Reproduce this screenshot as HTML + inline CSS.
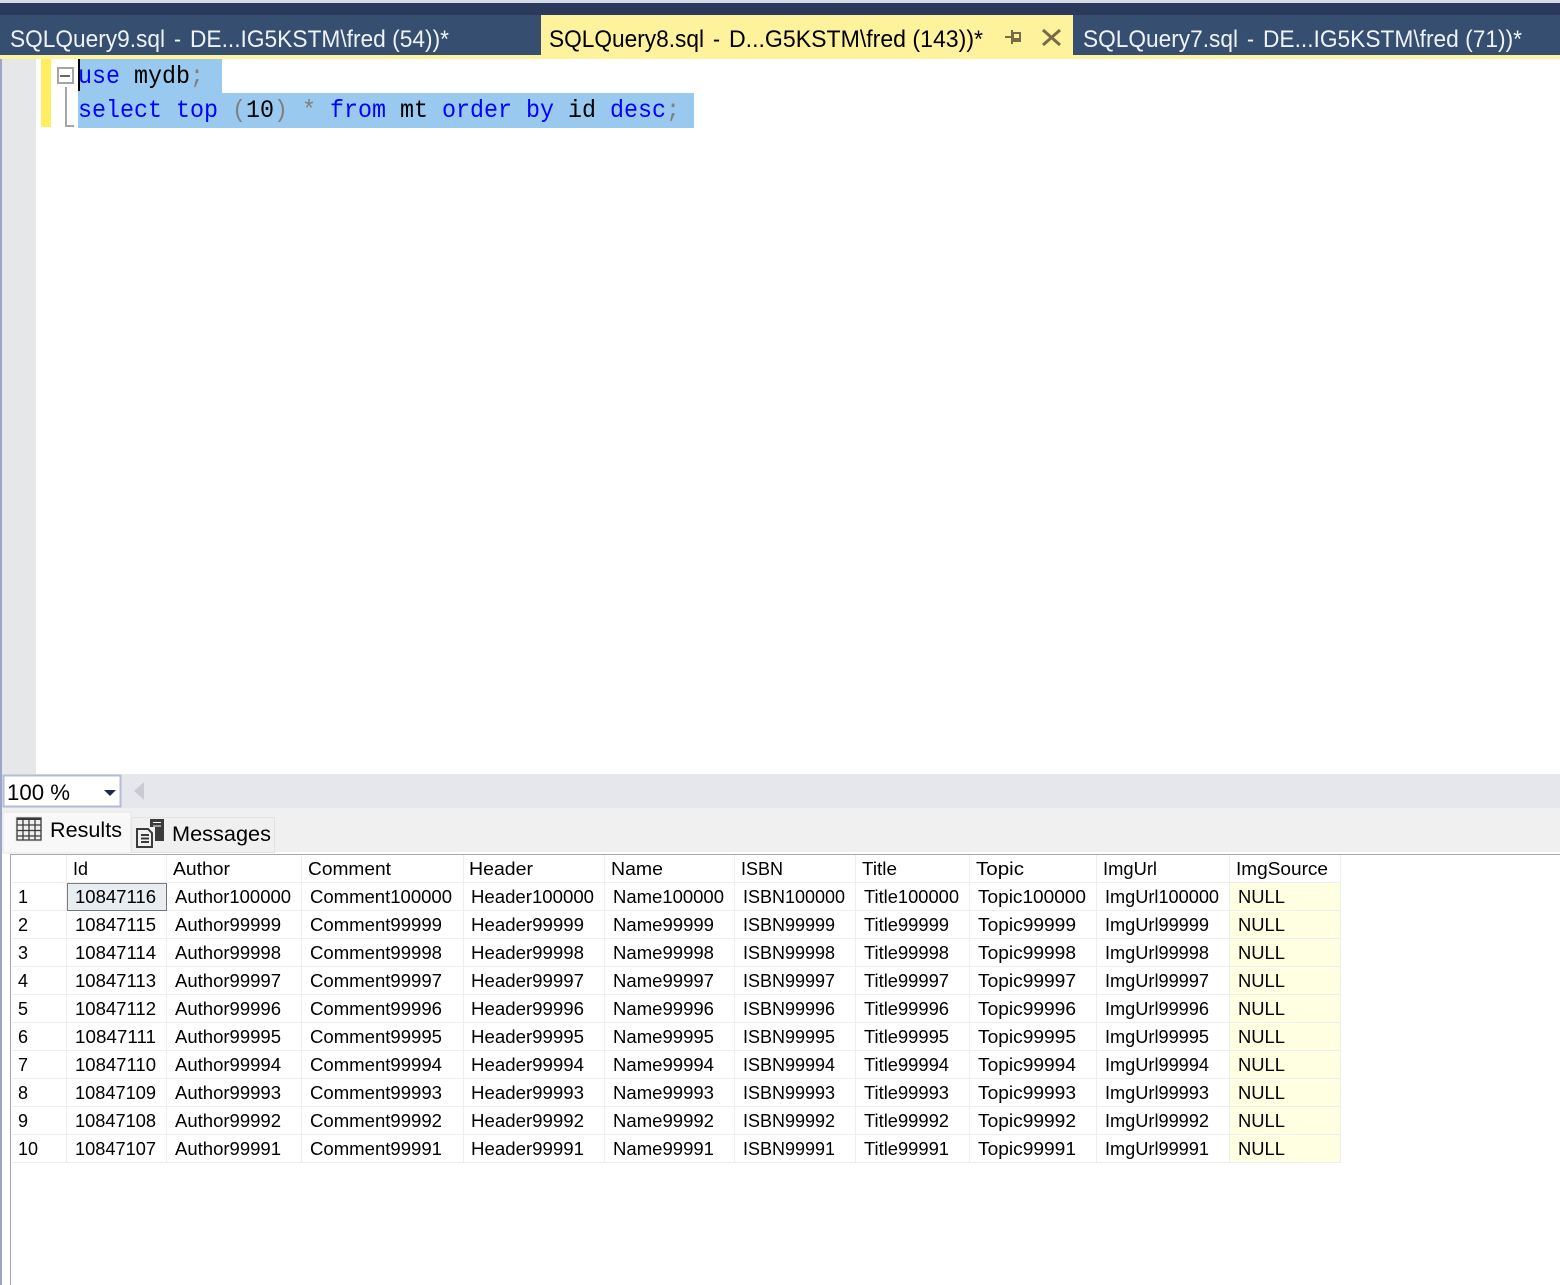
<!DOCTYPE html>
<html><head><meta charset="utf-8"><style>
html,body{margin:0;padding:0;background:#fff}
svg{display:block}
text{font-family:"Liberation Sans",sans-serif;font-size:18px;fill:#000}
.t{font-size:24px;fill:#eef2f6}
.a{font-size:24px;fill:#000}
.m{font-family:"Liberation Mono",monospace;font-size:25px;fill:#000;white-space:pre}
.k{fill:#0000ff}.g{fill:#808080}
</style></head><body>
<svg width="1560" height="1285" viewBox="0 0 1560 1285" xmlns="http://www.w3.org/2000/svg">
<rect width="1560" height="1285" fill="#fff"/>
<rect width="1560" height="3" fill="#d6dbe9"/>
<rect y="3" width="1560" height="12" fill="#2b3a5a"/>
<rect y="15" width="1560" height="40" fill="#364e6f"/>
<rect y="55" width="1560" height="4" fill="#fff29d"/>
<rect x="541" y="15" width="532" height="44" fill="#fff29d"/>
<text class="t" x="10" y="47" textLength="155" lengthAdjust="spacingAndGlyphs">SQLQuery9.sql</text><text class="t" x="174" y="47" textLength="7" lengthAdjust="spacingAndGlyphs">-</text><text class="t" x="190" y="47" textLength="259" lengthAdjust="spacingAndGlyphs">DE...IG5KSTM\fred (54))*</text>
<text class="a" x="549" y="47" textLength="155" lengthAdjust="spacingAndGlyphs">SQLQuery8.sql</text><text class="a" x="713" y="47" textLength="7" lengthAdjust="spacingAndGlyphs">-</text><text class="a" x="729" y="47" textLength="254" lengthAdjust="spacingAndGlyphs">D...G5KSTM\fred (143))*</text>
<text class="t" x="1083" y="47" textLength="155" lengthAdjust="spacingAndGlyphs">SQLQuery7.sql</text><text class="t" x="1247" y="47" textLength="7" lengthAdjust="spacingAndGlyphs">-</text><text class="t" x="1263" y="47" textLength="259" lengthAdjust="spacingAndGlyphs">DE...IG5KSTM\fred (71))*</text>
<path d="M1005 37h6M1012 30v14M1013 33h7v8h-7z" fill="none" stroke="#7a6a45" stroke-width="2"/><rect x="1013" y="38" width="8" height="4" fill="#7a6a45"/>
<path d="M1043 30L1060 45M1060 30L1043 45" stroke="#7a6a45" stroke-width="3" fill="none"/>

<rect x="0" y="59" width="2" height="1226" fill="#9aa5c8"/>
<rect x="2" y="59" width="34" height="715" fill="#e6e7e8"/>
<rect x="41" y="59" width="10" height="68" fill="#ffee62"/>
<rect x="78" y="59" width="144" height="34" fill="#99c9ef"/>
<rect x="78" y="93" width="616" height="35" fill="#99c9ef"/>
<rect x="58" y="68" width="15" height="15" fill="#fff" stroke="#a5a5a5" stroke-width="2"/>
<rect x="60" y="75" width="10" height="2" fill="#666"/>
<path d="M66 87V126H74" fill="none" stroke="#a5a5a5" stroke-width="2"/>
<rect x="78" y="59" width="2" height="32" fill="#000"/>
<text class="m" x="78" y="83" xml:space="preserve" textLength="126" lengthAdjust="spacingAndGlyphs"><tspan class="k">use</tspan> mydb<tspan class="g">;</tspan></text>
<text class="m" x="78" y="117" xml:space="preserve" textLength="602" lengthAdjust="spacingAndGlyphs"><tspan class="k">select</tspan> <tspan class="k">top</tspan> <tspan class="g">(</tspan>10<tspan class="g">)</tspan> <tspan class="g">*</tspan> <tspan class="k">from</tspan> mt <tspan class="k">order</tspan> <tspan class="k">by</tspan> id <tspan class="k">desc</tspan><tspan class="g">;</tspan></text>

<rect x="2" y="774" width="1558" height="34" fill="#e6e7ed"/>
<rect x="3.500" y="775.500" width="117" height="31" fill="#fff" stroke="#b4bcd6" stroke-width="2"/>
<text x="7" y="800" style="font-size:22px" textLength="63" lengthAdjust="spacingAndGlyphs">100 %</text>
<path d="M104 790h12l-6 6z" fill="#1e2b45"/>
<path d="M144 782v18l-10-9z" fill="#c9cad2"/>
<rect x="2" y="808" width="1558" height="477" fill="#fff"/>
<rect x="2" y="808" width="1558" height="44" fill="#f0f0f0"/>
<rect x="131.500" y="817.500" width="143" height="35" fill="#f0f0f0" stroke="#e2e2e2"/>
<rect x="3" y="812" width="128" height="41" fill="#f8f8f8" stroke="#e6e6e6"/>
<rect x="15" y="816" width="27" height="26" fill="#efefef"/>
<path d="M17 818h24v22h-24zM17 825h24M17 830.500h24M17 836h24M23 818v22M29 818v22M35 818v22" fill="none" stroke="#3a3a3a" stroke-width="1.300"/>
<rect x="17" y="818" width="24" height="2" fill="#3a3a3a"/>
<text x="50" y="837" style="font-size:21px" textLength="72" lengthAdjust="spacingAndGlyphs">Results</text>
<path d="M137 829h11l4 4v14h-15zM141 835h8M141 838.500h8M141 842h8" fill="none" stroke="#3a3a3a" stroke-width="2"/>
<path d="M150 819h14v22h-9v-14h-5z" fill="#3a3a3a"/><path d="M153 822.500h8M153 826h8" stroke="#fff" fill="none"/>
<text x="172" y="841" style="font-size:21px" textLength="99" lengthAdjust="spacingAndGlyphs">Messages</text>

<rect x="10" y="854" width="1550" height="1" fill="#a8a8a8"/>
<rect x="10" y="854" width="1" height="431" fill="#a8a8a8"/>
<rect x="1230" y="883" width="110" height="279" fill="#ffffe1"/>
<path d="M12 882.500H1341M12 910.500H1341M12 938.500H1341M12 966.500H1341M12 994.500H1341M12 1022.500H1341M12 1050.500H1341M12 1078.500H1341M12 1106.500H1341M12 1134.500H1341M12 1162.500H1341M66.500 855V1162M166.500 855V1162M301.500 855V1162M463.500 855V1162M604.500 855V1162M734.500 855V1162M855.500 855V1162M969.500 855V1162M1096.500 855V1162M1229.500 855V1162M1340.500 855V1162" stroke="#eeeeee" fill="none"/>
<rect x="67.500" y="883.500" width="99" height="27" fill="#e8edf1" stroke="#000" stroke-dasharray="1 1"/>

<text x="73" y="875" textLength="15" lengthAdjust="spacingAndGlyphs">Id</text><text x="173" y="875" textLength="57" lengthAdjust="spacingAndGlyphs">Author</text><text x="308" y="875" textLength="83" lengthAdjust="spacingAndGlyphs">Comment</text><text x="469" y="875" textLength="64" lengthAdjust="spacingAndGlyphs">Header</text><text x="611" y="875" textLength="52" lengthAdjust="spacingAndGlyphs">Name</text><text x="741" y="875" textLength="42" lengthAdjust="spacingAndGlyphs">ISBN</text><text x="862" y="875" textLength="35" lengthAdjust="spacingAndGlyphs">Title</text><text x="976" y="875" textLength="48" lengthAdjust="spacingAndGlyphs">Topic</text><text x="1103" y="875" textLength="54" lengthAdjust="spacingAndGlyphs">ImgUrl</text><text x="1236" y="875" textLength="92" lengthAdjust="spacingAndGlyphs">ImgSource</text>

<text x="18" y="903">1</text><text x="75" y="903" textLength="81" lengthAdjust="spacingAndGlyphs">10847116</text><text x="175" y="903" textLength="116" lengthAdjust="spacingAndGlyphs">Author100000</text><text x="310" y="903" textLength="142" lengthAdjust="spacingAndGlyphs">Comment100000</text><text x="471" y="903" textLength="123" lengthAdjust="spacingAndGlyphs">Header100000</text><text x="613" y="903" textLength="111" lengthAdjust="spacingAndGlyphs">Name100000</text><text x="743" y="903" textLength="102" lengthAdjust="spacingAndGlyphs">ISBN100000</text><text x="864" y="903" textLength="95" lengthAdjust="spacingAndGlyphs">Title100000</text><text x="978" y="903" textLength="108" lengthAdjust="spacingAndGlyphs">Topic100000</text><text x="1105" y="903" textLength="114" lengthAdjust="spacingAndGlyphs">ImgUrl100000</text><text x="1238" y="903" textLength="47" lengthAdjust="spacingAndGlyphs">NULL</text>

<text x="18" y="931">2</text><text x="75" y="931" textLength="81" lengthAdjust="spacingAndGlyphs">10847115</text><text x="175" y="931" textLength="106" lengthAdjust="spacingAndGlyphs">Author99999</text><text x="310" y="931" textLength="132" lengthAdjust="spacingAndGlyphs">Comment99999</text><text x="471" y="931" textLength="113" lengthAdjust="spacingAndGlyphs">Header99999</text><text x="613" y="931" textLength="101" lengthAdjust="spacingAndGlyphs">Name99999</text><text x="743" y="931" textLength="92" lengthAdjust="spacingAndGlyphs">ISBN99999</text><text x="864" y="931" textLength="85" lengthAdjust="spacingAndGlyphs">Title99999</text><text x="978" y="931" textLength="98" lengthAdjust="spacingAndGlyphs">Topic99999</text><text x="1105" y="931" textLength="104" lengthAdjust="spacingAndGlyphs">ImgUrl99999</text><text x="1238" y="931" textLength="47" lengthAdjust="spacingAndGlyphs">NULL</text>

<text x="18" y="959">3</text><text x="75" y="959" textLength="81" lengthAdjust="spacingAndGlyphs">10847114</text><text x="175" y="959" textLength="106" lengthAdjust="spacingAndGlyphs">Author99998</text><text x="310" y="959" textLength="132" lengthAdjust="spacingAndGlyphs">Comment99998</text><text x="471" y="959" textLength="113" lengthAdjust="spacingAndGlyphs">Header99998</text><text x="613" y="959" textLength="101" lengthAdjust="spacingAndGlyphs">Name99998</text><text x="743" y="959" textLength="92" lengthAdjust="spacingAndGlyphs">ISBN99998</text><text x="864" y="959" textLength="85" lengthAdjust="spacingAndGlyphs">Title99998</text><text x="978" y="959" textLength="98" lengthAdjust="spacingAndGlyphs">Topic99998</text><text x="1105" y="959" textLength="104" lengthAdjust="spacingAndGlyphs">ImgUrl99998</text><text x="1238" y="959" textLength="47" lengthAdjust="spacingAndGlyphs">NULL</text>

<text x="18" y="987">4</text><text x="75" y="987" textLength="81" lengthAdjust="spacingAndGlyphs">10847113</text><text x="175" y="987" textLength="106" lengthAdjust="spacingAndGlyphs">Author99997</text><text x="310" y="987" textLength="132" lengthAdjust="spacingAndGlyphs">Comment99997</text><text x="471" y="987" textLength="113" lengthAdjust="spacingAndGlyphs">Header99997</text><text x="613" y="987" textLength="101" lengthAdjust="spacingAndGlyphs">Name99997</text><text x="743" y="987" textLength="92" lengthAdjust="spacingAndGlyphs">ISBN99997</text><text x="864" y="987" textLength="85" lengthAdjust="spacingAndGlyphs">Title99997</text><text x="978" y="987" textLength="98" lengthAdjust="spacingAndGlyphs">Topic99997</text><text x="1105" y="987" textLength="104" lengthAdjust="spacingAndGlyphs">ImgUrl99997</text><text x="1238" y="987" textLength="47" lengthAdjust="spacingAndGlyphs">NULL</text>

<text x="18" y="1015">5</text><text x="75" y="1015" textLength="81" lengthAdjust="spacingAndGlyphs">10847112</text><text x="175" y="1015" textLength="106" lengthAdjust="spacingAndGlyphs">Author99996</text><text x="310" y="1015" textLength="132" lengthAdjust="spacingAndGlyphs">Comment99996</text><text x="471" y="1015" textLength="113" lengthAdjust="spacingAndGlyphs">Header99996</text><text x="613" y="1015" textLength="101" lengthAdjust="spacingAndGlyphs">Name99996</text><text x="743" y="1015" textLength="92" lengthAdjust="spacingAndGlyphs">ISBN99996</text><text x="864" y="1015" textLength="85" lengthAdjust="spacingAndGlyphs">Title99996</text><text x="978" y="1015" textLength="98" lengthAdjust="spacingAndGlyphs">Topic99996</text><text x="1105" y="1015" textLength="104" lengthAdjust="spacingAndGlyphs">ImgUrl99996</text><text x="1238" y="1015" textLength="47" lengthAdjust="spacingAndGlyphs">NULL</text>

<text x="18" y="1043">6</text><text x="75" y="1043" textLength="81" lengthAdjust="spacingAndGlyphs">10847111</text><text x="175" y="1043" textLength="106" lengthAdjust="spacingAndGlyphs">Author99995</text><text x="310" y="1043" textLength="132" lengthAdjust="spacingAndGlyphs">Comment99995</text><text x="471" y="1043" textLength="113" lengthAdjust="spacingAndGlyphs">Header99995</text><text x="613" y="1043" textLength="101" lengthAdjust="spacingAndGlyphs">Name99995</text><text x="743" y="1043" textLength="92" lengthAdjust="spacingAndGlyphs">ISBN99995</text><text x="864" y="1043" textLength="85" lengthAdjust="spacingAndGlyphs">Title99995</text><text x="978" y="1043" textLength="98" lengthAdjust="spacingAndGlyphs">Topic99995</text><text x="1105" y="1043" textLength="104" lengthAdjust="spacingAndGlyphs">ImgUrl99995</text><text x="1238" y="1043" textLength="47" lengthAdjust="spacingAndGlyphs">NULL</text>

<text x="18" y="1071">7</text><text x="75" y="1071" textLength="81" lengthAdjust="spacingAndGlyphs">10847110</text><text x="175" y="1071" textLength="106" lengthAdjust="spacingAndGlyphs">Author99994</text><text x="310" y="1071" textLength="132" lengthAdjust="spacingAndGlyphs">Comment99994</text><text x="471" y="1071" textLength="113" lengthAdjust="spacingAndGlyphs">Header99994</text><text x="613" y="1071" textLength="101" lengthAdjust="spacingAndGlyphs">Name99994</text><text x="743" y="1071" textLength="92" lengthAdjust="spacingAndGlyphs">ISBN99994</text><text x="864" y="1071" textLength="85" lengthAdjust="spacingAndGlyphs">Title99994</text><text x="978" y="1071" textLength="98" lengthAdjust="spacingAndGlyphs">Topic99994</text><text x="1105" y="1071" textLength="104" lengthAdjust="spacingAndGlyphs">ImgUrl99994</text><text x="1238" y="1071" textLength="47" lengthAdjust="spacingAndGlyphs">NULL</text>

<text x="18" y="1099">8</text><text x="75" y="1099" textLength="81" lengthAdjust="spacingAndGlyphs">10847109</text><text x="175" y="1099" textLength="106" lengthAdjust="spacingAndGlyphs">Author99993</text><text x="310" y="1099" textLength="132" lengthAdjust="spacingAndGlyphs">Comment99993</text><text x="471" y="1099" textLength="113" lengthAdjust="spacingAndGlyphs">Header99993</text><text x="613" y="1099" textLength="101" lengthAdjust="spacingAndGlyphs">Name99993</text><text x="743" y="1099" textLength="92" lengthAdjust="spacingAndGlyphs">ISBN99993</text><text x="864" y="1099" textLength="85" lengthAdjust="spacingAndGlyphs">Title99993</text><text x="978" y="1099" textLength="98" lengthAdjust="spacingAndGlyphs">Topic99993</text><text x="1105" y="1099" textLength="104" lengthAdjust="spacingAndGlyphs">ImgUrl99993</text><text x="1238" y="1099" textLength="47" lengthAdjust="spacingAndGlyphs">NULL</text>

<text x="18" y="1127">9</text><text x="75" y="1127" textLength="81" lengthAdjust="spacingAndGlyphs">10847108</text><text x="175" y="1127" textLength="106" lengthAdjust="spacingAndGlyphs">Author99992</text><text x="310" y="1127" textLength="132" lengthAdjust="spacingAndGlyphs">Comment99992</text><text x="471" y="1127" textLength="113" lengthAdjust="spacingAndGlyphs">Header99992</text><text x="613" y="1127" textLength="101" lengthAdjust="spacingAndGlyphs">Name99992</text><text x="743" y="1127" textLength="92" lengthAdjust="spacingAndGlyphs">ISBN99992</text><text x="864" y="1127" textLength="85" lengthAdjust="spacingAndGlyphs">Title99992</text><text x="978" y="1127" textLength="98" lengthAdjust="spacingAndGlyphs">Topic99992</text><text x="1105" y="1127" textLength="104" lengthAdjust="spacingAndGlyphs">ImgUrl99992</text><text x="1238" y="1127" textLength="47" lengthAdjust="spacingAndGlyphs">NULL</text>

<text x="18" y="1155">10</text><text x="75" y="1155" textLength="81" lengthAdjust="spacingAndGlyphs">10847107</text><text x="175" y="1155" textLength="106" lengthAdjust="spacingAndGlyphs">Author99991</text><text x="310" y="1155" textLength="132" lengthAdjust="spacingAndGlyphs">Comment99991</text><text x="471" y="1155" textLength="113" lengthAdjust="spacingAndGlyphs">Header99991</text><text x="613" y="1155" textLength="101" lengthAdjust="spacingAndGlyphs">Name99991</text><text x="743" y="1155" textLength="92" lengthAdjust="spacingAndGlyphs">ISBN99991</text><text x="864" y="1155" textLength="85" lengthAdjust="spacingAndGlyphs">Title99991</text><text x="978" y="1155" textLength="98" lengthAdjust="spacingAndGlyphs">Topic99991</text><text x="1105" y="1155" textLength="104" lengthAdjust="spacingAndGlyphs">ImgUrl99991</text><text x="1238" y="1155" textLength="47" lengthAdjust="spacingAndGlyphs">NULL</text>
</svg>
</body></html>
